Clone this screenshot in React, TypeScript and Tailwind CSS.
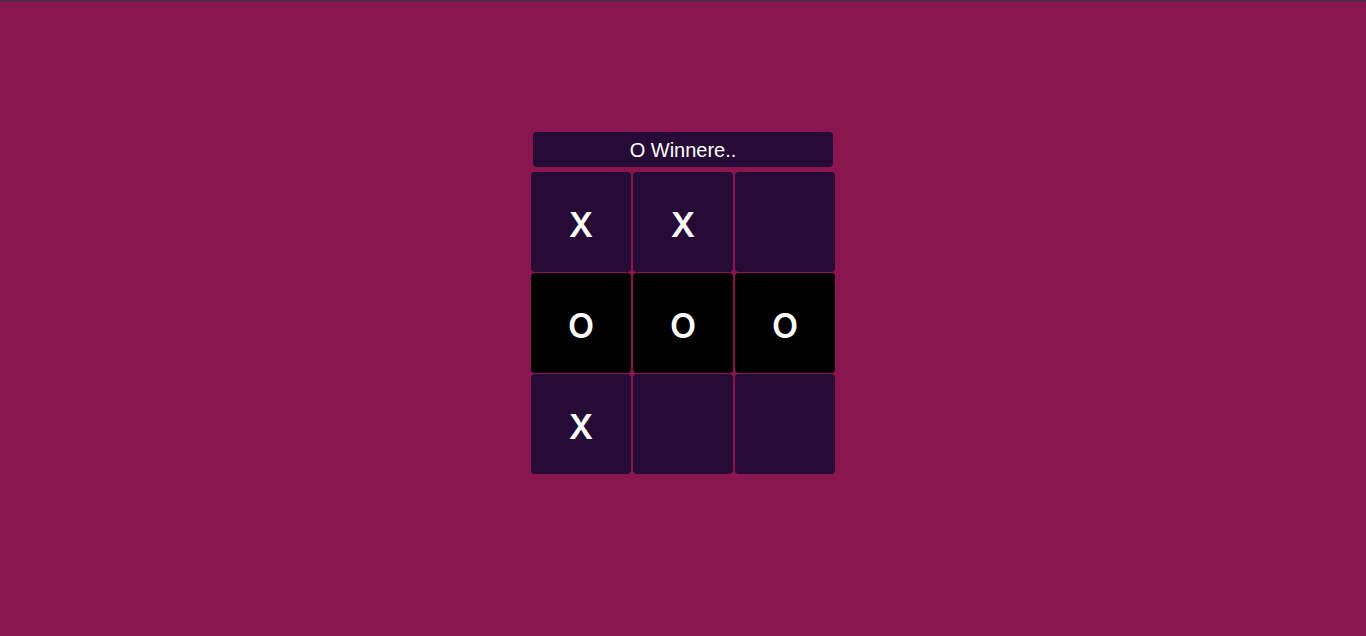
import React, { useState } from "react";

type Mark = "X" | "O" | "";

const App: React.FC = () => {
  const [board] = useState<Mark[]>(["X", "X", "", "O", "O", "O", "X", "", ""]);
  const winLine = [3, 4, 5];

  return (
    <div className="min-h-[636px] bg-[#8a1650] font-['Liberation_Sans',Arial,sans-serif]">
      <div className="h-px bg-[#2c3e4a]" />
      <div className="flex flex-col items-center pt-[131px]">
        {/* Status bar */}
        <div className="w-[300px] h-[35px] rounded bg-[#250b35] text-white text-[20px] flex items-center justify-center">
          O Winnere..
        </div>

        {/* Board */}
        <div className="mt-[5px] grid grid-cols-[repeat(3,100px)] gap-x-[2px] gap-y-px">
          {board.map((cell, i) => (
            <div
              key={i}
              className={`w-[100px] h-[100px] rounded flex items-center justify-center pt-[5px] text-white text-[34px] font-semibold font-['Inter',sans-serif] ${
                winLine.includes(i) ? "bg-black" : "bg-[#250b35]"
              }`}
            >
              {cell}
            </div>
          ))}
        </div>
      </div>
    </div>
  );
};

export default App;
